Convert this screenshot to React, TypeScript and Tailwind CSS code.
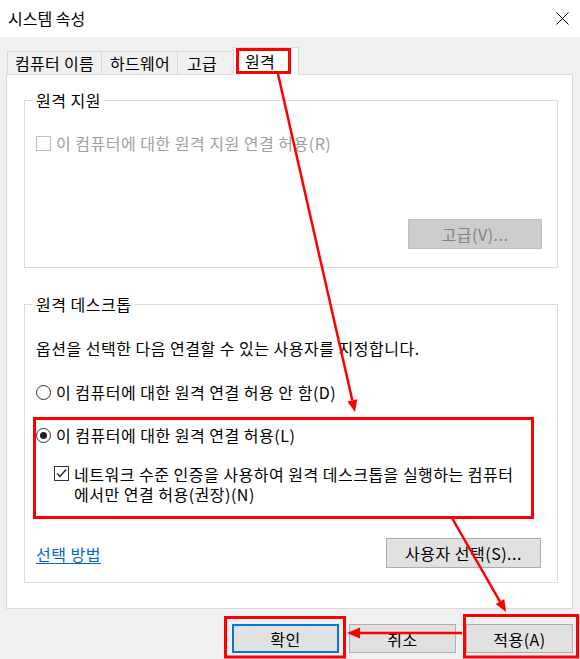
import React from "react";

const FONT = "'Noto Sans CJK KR', 'Malgun Gothic', sans-serif";

function Radio({ checked }: { checked?: boolean }) {
  return (
    <span className="w-[15px] h-[15px] rounded-full border border-[#333333] bg-white flex items-center justify-center shrink-0">
      {checked && <span className="w-[7px] h-[7px] rounded-full bg-[#222222]" />}
    </span>
  );
}

function CheckBox({ checked, disabled }: { checked?: boolean; disabled?: boolean }) {
  return (
    <span
      className={
        disabled
          ? "w-[15px] h-[15px] border border-[#bcbcbc] bg-white shrink-0 flex items-center justify-center"
          : "w-[15px] h-[15px] border border-[#333333] bg-white shrink-0 flex items-center justify-center"
      }
    >
      {checked && (
        <svg width="11" height="11" viewBox="0 0 11 11">
          <path d="M1 5.5 L4 8.5 L10 1.5" fill="none" stroke="#222" strokeWidth="1.3" />
        </svg>
      )}
    </span>
  );
}

export default function App() {
  return (
    <div
      className="relative w-[580px] h-[659px] bg-[#f0f0f0] overflow-hidden text-black"
      style={{ fontFamily: FONT }}
    >
      {/* Title bar */}
      <div className="h-[37px] bg-white flex items-center justify-between pl-[8px] pr-[11px]">
        <span className="text-[16px] leading-[20px] -mt-[1px]">시스템 속성</span>
        <svg width="13" height="13" viewBox="0 0 13 13" className="-mt-[1px]">
          <path d="M0.5 0.5 L12.5 12.5 M12.5 0.5 L0.5 12.5" stroke="#000" strokeWidth="1" />
        </svg>
      </div>

      {/* Tabs */}
      <div className="mt-[10px] ml-[7px] h-[28px] flex items-end relative z-10 -mb-[1px] text-[16px] leading-[20px] tracking-[0.3px]">
        <div className="w-[94px] h-[23px] mb-[1px] border-t border-l border-[#d9d9d9] bg-[#f0f0f0] flex items-center pl-[7px]">
          컴퓨터 이름
        </div>
        <div className="w-[76px] h-[23px] mb-[1px] border-t border-l border-[#d9d9d9] bg-[#f0f0f0] flex items-center pl-[8px]">
          하드웨어
        </div>
        <div className="w-[56px] h-[23px] mb-[1px] border-t border-l border-[#d9d9d9] bg-[#f0f0f0] flex items-center pl-[9px]">
          고급
        </div>
        <div className="w-[66px] h-[28px] border-t border-l border-r border-[#d9d9d9] bg-white flex items-center pl-[11px] pb-[1px]">
          원격
        </div>
      </div>

      {/* Tab panel */}
      <div className="ml-[6px] w-[567px] h-[535px] bg-white border border-[#d9d9d9] text-[16px] leading-[20px] tracking-[0.5px]">
        {/* Group 1 */}
        <fieldset className="mt-[15px] ml-[17px] w-[534px] h-[178px] border border-[#dcdcdc]">
          <legend className="ml-[8px] px-[3px] leading-[20px]">원격 지원</legend>
          <div className="pl-[11px] mt-[23px] flex items-center gap-[5px] h-[20px] text-[#a0a0a0]">
            <CheckBox disabled />
            <span>이 컴퓨터에 대한 원격 지원 연결 허용(R)</span>
          </div>
          <div className="mt-[66px] flex justify-end pr-[15px]">
            <div className="w-[134px] h-[30px] bg-[#cccccc] border border-[#bfbfbf] text-[#838383] flex items-center justify-center">
              고급(V)...
            </div>
          </div>
        </fieldset>

        {/* Group 2 */}
        <fieldset className="mt-[26px] ml-[17px] w-[534px] h-[289px] border border-[#dcdcdc]">
          <legend className="ml-[8px] px-[3px] leading-[20px]">원격 데스크톱</legend>
          <div className="pl-[11px]">
            <div className="mt-[24px] h-[20px]">옵션을 선택한 다음 연결할 수 있는 사용자를 지정합니다.</div>
            <div className="mt-[24px] h-[20px] flex items-center gap-[5px]">
              <Radio />
              <span>이 컴퓨터에 대한 원격 연결 허용 안 함(D)</span>
            </div>
            <div className="mt-[23px] h-[20px] flex items-center gap-[5px]">
              <Radio checked />
              <span>이 컴퓨터에 대한 원격 연결 허용(L)</span>
            </div>
            <div className="mt-[19px] ml-[18px] flex items-start gap-[5px]">
              <span className="mt-[2px]">
                <CheckBox checked />
              </span>
              <span className="leading-[20px] whitespace-nowrap">
                네트워크 수준 인증을 사용하여 원격 데스크톱을 실행하는 컴퓨터
                <br />
                에서만 연결 허용(권장)(N)
              </span>
            </div>
          </div>
          <div className="mt-[34px] pl-[11px] pr-[16px] flex items-center justify-between">
            <span className="text-[#0066cc] underline underline-offset-[2px] mt-[2px]">선택 방법</span>
            <div className="w-[155px] h-[30px] bg-[#e1e1e1] border border-[#adadad] flex items-center justify-center">
              사용자 선택(S)...
            </div>
          </div>
        </fieldset>
      </div>

      {/* Bottom buttons */}
      <div className="mt-[15px] pr-[7px] flex justify-end gap-[10px] text-[16px] leading-[20px] tracking-[0.5px]">
        <div className="w-[107px] h-[29px] bg-[#e1e1e1] border-2 border-[#0078d7] flex items-center justify-center">
          확인
        </div>
        <div className="w-[107px] h-[29px] bg-[#e1e1e1] border border-[#adadad] flex items-center justify-center">
          취소
        </div>
        <div className="w-[107px] h-[29px] bg-[#e1e1e1] border border-[#adadad] flex items-center justify-center">
          적용(A)
        </div>
      </div>

      {/* Red annotations overlay */}
      <svg
        className="absolute inset-0 pointer-events-none z-20"
        width="580"
        height="659"
        viewBox="0 0 580 659"
      >
        <g fill="none" stroke="#ff0000" strokeWidth="3">
          <rect x="237.5" y="49.5" width="52" height="23" />
          <rect x="34.5" y="418.5" width="498" height="99" />
          <rect x="225.5" y="617.5" width="119" height="39.5" />
          <rect x="464.5" y="615.5" width="113" height="41.5" />
        </g>
        <g stroke="#ff0000" strokeWidth="2.5">
          <line x1="278" y1="74" x2="352.3" y2="400.3" />
          <line x1="452" y1="518" x2="500" y2="601.6" />
          <line x1="462" y1="633" x2="359" y2="633" />
        </g>
        <g fill="#ff0000">
          <polygon points="355,412 347.4,401.4 357.2,399.2" />
          <polygon points="506,612 495.7,604.1 504.3,599.1" />
          <polygon points="347,633 360,627.5 360,638.5" />
        </g>
      </svg>
    </div>
  );
}
